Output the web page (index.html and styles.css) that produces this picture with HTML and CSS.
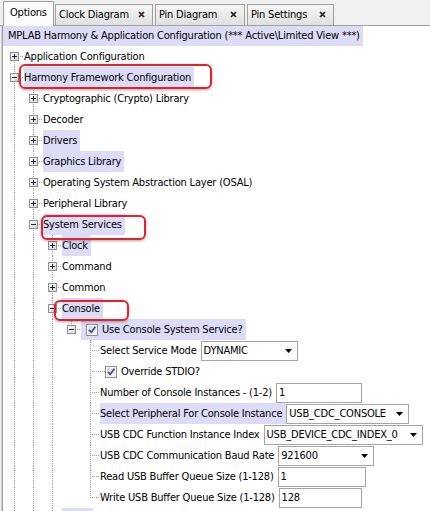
FILE: index.html
```html
<!DOCTYPE html>
<html>
<head>
<meta charset="utf-8">
<link rel="stylesheet" href="styles.css">
</head>
<body>
<div class="page">
<svg class="defs" width="0" height="0">
  <defs>
    <linearGradient id="eg" x1="0" y1="0" x2="1" y2="1">
      <stop offset="0" stop-color="#ffffff"/>
      <stop offset="1" stop-color="#d6d6d6"/>
    </linearGradient>
    <linearGradient id="cg" x1="0" y1="0" x2="1" y2="1">
      <stop offset="0" stop-color="#d9d9d9"/>
      <stop offset="1" stop-color="#f7f7f7"/>
    </linearGradient>
    <symbol id="plus" viewBox="0 0 9 9">
      <rect x=".5" y=".5" width="8" height="8" fill="url(#eg)" stroke="#8e8e8e"/>
      <path d="M2 4.5h5M4.5 2v5" stroke="#1a1f3a"/>
    </symbol>
    <symbol id="minus" viewBox="0 0 9 9">
      <rect x=".5" y=".5" width="8" height="8" fill="url(#eg)" stroke="#8e8e8e"/>
      <path d="M2 4.5h5" stroke="#1a1f3a"/>
    </symbol>
    <symbol id="chk" viewBox="0 0 12 12">
      <rect x=".5" y=".5" width="11" height="11" fill="#fbfbfb" stroke="#8e8f8f"/>
      <rect x="2" y="2" width="8" height="8" fill="url(#cg)"/>
      <path d="M3 5.8l2.2 2.6L9.4 2.8" fill="none" stroke="#3a4f91" stroke-width="1.7"/>
    </symbol>
    <symbol id="arr" viewBox="0 0 7 4">
      <path d="M0 0h7L3.5 4z" fill="#000"/>
    </symbol>
    <symbol id="cls" viewBox="0 0 7 7">
      <path d="M1 1l5 5M6 1l-5 5" stroke="#1e1e1e" stroke-width="1.7"/>
    </symbol>
  </defs>
</svg>

<div class="tabs">
  <div class="tab on w-opt">Options</div>
  <div class="tab w-clock"><span>Clock Diagram</span><svg class="cls"><use href="#cls"/></svg></div>
  <div class="tab w-pind"><span>Pin Diagram</span><svg class="cls"><use href="#cls"/></svg></div>
  <div class="tab w-pins"><span>Pin Settings</span><svg class="cls"><use href="#cls"/></svg></div>
</div>

<div class="panel">
  <div class="hdr"><span class="hl hdr-l">MPLAB Harmony &amp; Application Configuration (*** Active\Limited View ***)</span></div>

  <div class="row"><span class="g f"><svg class="exp"><use href="#plus"/></svg></span><span class="lbl">Application Configuration</span></div>
  <div class="row"><span class="g t"><svg class="exp"><use href="#minus"/></svg></span><span class="lbl hl">Harmony Framework Configuration</span></div>

  <div class="row"><span class="g v"></span><span class="g t"><svg class="exp"><use href="#plus"/></svg></span><span class="lbl">Cryptographic (Crypto) Library</span></div>
  <div class="row"><span class="g v"></span><span class="g t"><svg class="exp"><use href="#plus"/></svg></span><span class="lbl">Decoder</span></div>
  <div class="row"><span class="g v"></span><span class="g t"><svg class="exp"><use href="#plus"/></svg></span><span class="lbl hl">Drivers</span></div>
  <div class="row"><span class="g v"></span><span class="g t"><svg class="exp"><use href="#plus"/></svg></span><span class="lbl hl">Graphics Library</span></div>
  <div class="row"><span class="g v"></span><span class="g t"><svg class="exp"><use href="#plus"/></svg></span><span class="lbl">Operating System Abstraction Layer (OSAL)</span></div>
  <div class="row"><span class="g v"></span><span class="g t"><svg class="exp"><use href="#plus"/></svg></span><span class="lbl">Peripheral Library</span></div>
  <div class="row"><span class="g v"></span><span class="g t"><svg class="exp"><use href="#minus"/></svg></span><span class="lbl hl">System Services</span></div>

  <div class="row"><span class="g v"></span><span class="g v"></span><span class="g t"><svg class="exp"><use href="#plus"/></svg></span><span class="lbl hl">Clock</span></div>
  <div class="row"><span class="g v"></span><span class="g v"></span><span class="g t"><svg class="exp"><use href="#plus"/></svg></span><span class="lbl">Command</span></div>
  <div class="row"><span class="g v"></span><span class="g v"></span><span class="g t"><svg class="exp"><use href="#plus"/></svg></span><span class="lbl">Common</span></div>
  <div class="row"><span class="g v"></span><span class="g v"></span><span class="g t"><svg class="exp"><use href="#minus"/></svg></span><span class="lbl hl">Console</span></div>

  <div class="row"><span class="g v"></span><span class="g v"></span><span class="g v"></span><span class="g l"><svg class="exp"><use href="#minus"/></svg></span><span class="cbl hl pad"><svg class="cb"><use href="#chk"/></svg>Use Console System Service?</span></div>

  <div class="row"><span class="g v"></span><span class="g v"></span><span class="g v"></span><span class="g"></span><span class="g t"></span><span class="lbl fl">Select Service Mode</span><span class="fld dd w-mode">DYNAMIC<svg class="arr"><use href="#arr"/></svg></span></div>
  <div class="row"><span class="g v"></span><span class="g v"></span><span class="g v"></span><span class="g"></span><span class="g t"></span><span class="stub"></span><span class="cbl"><svg class="cb"><use href="#chk"/></svg>Override STDIO?</span></div>
  <div class="row"><span class="g v"></span><span class="g v"></span><span class="g v"></span><span class="g"></span><span class="g t"></span><span class="lbl fl">Number of Console Instances - (1-2)</span><span class="fld w-num">1</span></div>
  <div class="row"><span class="g v"></span><span class="g v"></span><span class="g v"></span><span class="g"></span><span class="g t"></span><span class="lbl fl hl">Select Peripheral For Console Instance</span><span class="fld dd w-per">USB_CDC_CONSOLE<svg class="arr"><use href="#arr"/></svg></span></div>
  <div class="row"><span class="g v"></span><span class="g v"></span><span class="g v"></span><span class="g"></span><span class="g t"></span><span class="lbl fl">USB CDC Function Instance Index</span><span class="fld dd w-idx">USB_DEVICE_CDC_INDEX_0<svg class="arr"><use href="#arr"/></svg></span></div>
  <div class="row"><span class="g v"></span><span class="g v"></span><span class="g v"></span><span class="g"></span><span class="g t"></span><span class="lbl fl">USB CDC Communication Baud Rate</span><span class="fld dd w-baud">921600<svg class="arr"><use href="#arr"/></svg></span></div>
  <div class="row"><span class="g v"></span><span class="g v"></span><span class="g v"></span><span class="g"></span><span class="g t"></span><span class="lbl fl">Read USB Buffer Queue Size (1-128)</span><span class="fld w-read">1</span></div>
  <div class="row"><span class="g v"></span><span class="g v"></span><span class="g v"></span><span class="g"></span><span class="g l"></span><span class="lbl fl">Write USB Buffer Queue Size (1-128)</span><span class="fld w-write">128</span></div>

  <div class="row"><span class="g v"></span><span class="g v"></span><span class="g t"><svg class="exp"><use href="#plus"/></svg></span><span class="hl next"></span></div>
</div>

<div class="mark m1"></div>
<div class="mark m2"></div>
<div class="mark m3"></div>
</div>
</body>
</html>
```

FILE: styles.css
```css
* { box-sizing: border-box; }
html, body { margin: 0; padding: 0; }
body {
  background: #fff;
  font-family: "DejaVu Sans Condensed", "Liberation Sans", sans-serif;
  font-size: 11px;
  letter-spacing: -0.2px;
  color: #000;
}
.page {
  position: relative;
  width: 430px;
  height: 511px;
  overflow: hidden;
  background: #f0f0f0;
}
.defs { display: block; width: 0; height: 0; overflow: hidden; }

/* tabs */
.tabs {
  display: flex;
  align-items: flex-end;
  height: 26px;
  padding-left: 3px;
  border-bottom: 1px solid #a0a0a0;
  background: #f0f0f0;
}
.tab {
  height: 21px;
  display: flex;
  align-items: center;
  justify-content: space-between;
  padding: 0 7px 1px 3px;
  border: 1px solid #a0a0a0;
  border-bottom: none;
  background: linear-gradient(#f5f5f5, #e0e0e0);
  white-space: nowrap;
  margin-left: 2px;
}
.tab.on {
  height: 25px;
  margin-bottom: -1px;
  margin-left: 0;
  padding: 0 0 3px 6px;
  justify-content: flex-start;
  background: #fbfbfb;
}
.w-opt { width: 51px; }
.w-clock { width: 98px; margin-left: 1px; }
.w-pind { width: 90px; }
.w-pins { width: 87px; }
.cls { width: 7px; height: 7px; display: block; flex: none; }

/* panel */
.panel {
  margin-left: 2px;
  border-left: 1px solid #a0a0a0;
  box-shadow: -1px 0 0 #d0d0d0;
  background: #fff;
  height: 485px;
}
.hdr { display: flex; height: 20px; }
.hdr-l { padding: 0 3px 0 5px; line-height: 20px; white-space: nowrap; }

.row {
  display: flex;
  height: 21px;
  padding-left: 2px;
  white-space: nowrap;
}
.lbl { line-height: 21px; padding-right: 3px; }
.lbl.fl { padding-right: 4px; }
.hl { background: #dcdcf7; }
.next { width: 31px; height: 21px; }

/* tree guide cells */
.g {
  flex: none;
  width: 19px;
  height: 21px;
  display: flex;
  align-items: center;
  background-repeat: no-repeat;
}
.v {
  background-image: repeating-linear-gradient(to bottom, #a0a0a0 0 1px, transparent 1px 2px);
  background-size: 1px 21px;
  background-position: 9px 0;
}
.t {
  background-image:
    repeating-linear-gradient(to bottom, #a0a0a0 0 1px, transparent 1px 2px),
    repeating-linear-gradient(to right, #a0a0a0 0 1px, transparent 1px 2px);
  background-size: 1px 21px, 10px 1px;
  background-position: 9px 0, 9px 10px;
}
.l {
  background-image:
    repeating-linear-gradient(to bottom, #a0a0a0 0 1px, transparent 1px 2px),
    repeating-linear-gradient(to right, #a0a0a0 0 1px, transparent 1px 2px);
  background-size: 1px 11px, 10px 1px;
  background-position: 9px 0, 9px 10px;
}
.f {
  background-image:
    repeating-linear-gradient(to bottom, #a0a0a0 0 1px, transparent 1px 2px),
    repeating-linear-gradient(to right, #a0a0a0 0 1px, transparent 1px 2px);
  background-size: 1px 11px, 10px 1px;
  background-position: 9px 10px, 9px 10px;
}
.exp { width: 9px; height: 9px; margin-left: 5px; display: block; }

/* checkbox items */
.stub {
  flex: none;
  width: 5px;
  height: 21px;
  background-image: repeating-linear-gradient(to right, #a0a0a0 0 1px, transparent 1px 2px);
  background-size: 5px 1px;
  background-position: 0 10px;
  background-repeat: no-repeat;
}
.cbl {
  display: flex;
  align-items: center;
  gap: 4px;
  line-height: 21px;
  padding-right: 3px;
}
.cbl.pad { padding-left: 5px; }
.cb { width: 12px; height: 12px; display: block; flex: none; }

/* fields */
.fld {
  flex: none;
  height: 20px;
  align-self: flex-end;
  display: flex;
  align-items: center;
  border: 1px solid #a5a5a5;
  background: #fff;
  padding: 0 5px 0 2px;
  line-height: 18px;
}
.dd { justify-content: space-between; }
.arr { width: 7px; height: 4px; display: block; flex: none; }
.w-mode { width: 97px; }
.w-num { width: 86px; }
.w-per { width: 123px; }
.w-idx { width: 159px; }
.w-baud { width: 96px; }
.w-read { width: 88px; }
.w-write { width: 83px; }

/* annotation marks */
.mark {
  position: absolute;
  border: 2px solid #e4222c;
  border-radius: 6px;
  box-shadow: 0 1px 3px rgba(0, 0, 0, 0.35);
}
.m1 { left: 19px; top: 64px; width: 193px; height: 25px; }
.m2 { left: 41px; top: 215px; width: 105px; height: 25px; }
.m3 { left: 54px; top: 300px; width: 75px; height: 21px; }
```
